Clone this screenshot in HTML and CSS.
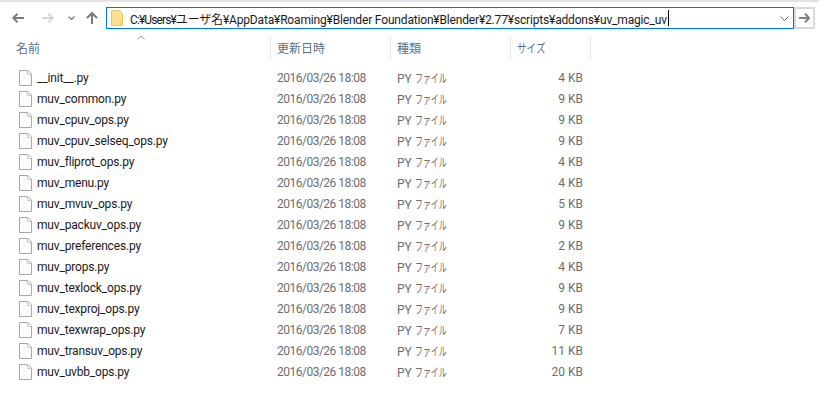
FILE: index.html
```html
<!DOCTYPE html>
<html lang="ja">
<head>
    <meta charset="UTF-8">
    <meta name="viewport" content="width=device-width, initial-scale=1.0">
    <title>uv_magic_uv</title>
    <link rel="stylesheet" href="styles.css">
</head>
<body>
    <div class="top-line"></div>

    <svg class="defs" width="0" height="0">
        <symbol id="file" viewBox="0 0 13 16">
            <path d="M.5.500h8.500l3.500 3.500v11.500H.5z" fill="#fbfbfb" stroke="#a8a8a8"/>
            <path d="M8.500.500v4h4" fill="none" stroke="#c8c8c8"/>
        </symbol>
    </svg>

    <div class="nav-bar">
        <svg class="nav-icon back" width="12" height="10" viewBox="0 0 12 10"><path d="M5.500.700 1.300 5l4.200 4.300M1.300 5H12" fill="none" stroke="#7a7a7a" stroke-width="2"/></svg>
        <svg class="nav-icon forward" width="12" height="10" viewBox="0 0 12 10"><path d="M6.500.700 10.700 5l-4.200 4.300M10.700 5H0" fill="none" stroke="#d6d6d6" stroke-width="2"/></svg>
        <svg class="nav-icon recent" width="7" height="4" viewBox="0 0 7 4"><path d="M.5.500l3 3 3-3" fill="none" stroke="#7f7f7f" stroke-width="1.300"/></svg>
        <svg class="nav-icon up" width="12" height="12" viewBox="0 0 12 12"><path d="M1 6l5-5 5 5M6 1v11" fill="none" stroke="#7a7a7a" stroke-width="2"/></svg>

        <div class="address-box">
            <svg class="folder" width="12" height="16" viewBox="0 0 12 16"><path d="M.5.500h8l3 3v12H.5z" fill="#fbe08f" stroke="#eac65a"/><path d="M9.500 11v4.500h2V11z" fill="#f3cf6d"/></svg>
            <span class="path"><span class="path-head">C:¥Users¥</span>ユーザ名¥AppData¥Roaming¥Blender Foundation¥Blender¥2.77¥scripts¥addons¥uv_magic_uv</span>
            <span class="caret"></span>
            <svg class="dropdown" width="9" height="5" viewBox="0 0 9 5"><path d="M.5.500l4 4 4-4" fill="none" stroke="#6d6d6d" stroke-width="1"/></svg>
        </div>

        <div class="go-button">
            <svg width="11" height="10" viewBox="0 0 11 10"><path d="M6 .700 10 5 6 9.300M10 5H0" fill="none" stroke="#808080" stroke-width="2"/></svg>
        </div>
    </div>

    <div class="sort-arrow">
        <svg width="8" height="5" viewBox="0 0 8 5"><path d="M.5 4.500l3.500-3.500 3.500 3.500" fill="none" stroke="#9a9a9a"/></svg>
    </div>

    <div class="header-row">
        <div class="col-name header-cell">名前</div>
        <div class="col-date header-cell">更新日時</div>
        <div class="col-type header-cell">種類</div>
        <div class="col-size header-cell"><span class="kana-size">サイズ</span></div>
    </div>

    <div class="file-list">
        <div class="file-row"><div class="col-name"><svg class="file-icon" width="13" height="16"><use href="#file"/></svg><span>__init__.py</span></div><div class="col-date">2016/03/26 18:08</div><div class="col-type">PY <span class="kana">ファイル</span></div><div class="col-size">4 KB</div></div>
        <div class="file-row"><div class="col-name"><svg class="file-icon" width="13" height="16"><use href="#file"/></svg><span>muv_common.py</span></div><div class="col-date">2016/03/26 18:08</div><div class="col-type">PY <span class="kana">ファイル</span></div><div class="col-size">9 KB</div></div>
        <div class="file-row"><div class="col-name"><svg class="file-icon" width="13" height="16"><use href="#file"/></svg><span>muv_cpuv_ops.py</span></div><div class="col-date">2016/03/26 18:08</div><div class="col-type">PY <span class="kana">ファイル</span></div><div class="col-size">9 KB</div></div>
        <div class="file-row"><div class="col-name"><svg class="file-icon" width="13" height="16"><use href="#file"/></svg><span>muv_cpuv_selseq_ops.py</span></div><div class="col-date">2016/03/26 18:08</div><div class="col-type">PY <span class="kana">ファイル</span></div><div class="col-size">9 KB</div></div>
        <div class="file-row"><div class="col-name"><svg class="file-icon" width="13" height="16"><use href="#file"/></svg><span>muv_fliprot_ops.py</span></div><div class="col-date">2016/03/26 18:08</div><div class="col-type">PY <span class="kana">ファイル</span></div><div class="col-size">4 KB</div></div>
        <div class="file-row"><div class="col-name"><svg class="file-icon" width="13" height="16"><use href="#file"/></svg><span>muv_menu.py</span></div><div class="col-date">2016/03/26 18:08</div><div class="col-type">PY <span class="kana">ファイル</span></div><div class="col-size">4 KB</div></div>
        <div class="file-row"><div class="col-name"><svg class="file-icon" width="13" height="16"><use href="#file"/></svg><span>muv_mvuv_ops.py</span></div><div class="col-date">2016/03/26 18:08</div><div class="col-type">PY <span class="kana">ファイル</span></div><div class="col-size">5 KB</div></div>
        <div class="file-row"><div class="col-name"><svg class="file-icon" width="13" height="16"><use href="#file"/></svg><span>muv_packuv_ops.py</span></div><div class="col-date">2016/03/26 18:08</div><div class="col-type">PY <span class="kana">ファイル</span></div><div class="col-size">9 KB</div></div>
        <div class="file-row"><div class="col-name"><svg class="file-icon" width="13" height="16"><use href="#file"/></svg><span>muv_preferences.py</span></div><div class="col-date">2016/03/26 18:08</div><div class="col-type">PY <span class="kana">ファイル</span></div><div class="col-size">2 KB</div></div>
        <div class="file-row"><div class="col-name"><svg class="file-icon" width="13" height="16"><use href="#file"/></svg><span>muv_props.py</span></div><div class="col-date">2016/03/26 18:08</div><div class="col-type">PY <span class="kana">ファイル</span></div><div class="col-size">4 KB</div></div>
        <div class="file-row"><div class="col-name"><svg class="file-icon" width="13" height="16"><use href="#file"/></svg><span>muv_texlock_ops.py</span></div><div class="col-date">2016/03/26 18:08</div><div class="col-type">PY <span class="kana">ファイル</span></div><div class="col-size">9 KB</div></div>
        <div class="file-row"><div class="col-name"><svg class="file-icon" width="13" height="16"><use href="#file"/></svg><span>muv_texproj_ops.py</span></div><div class="col-date">2016/03/26 18:08</div><div class="col-type">PY <span class="kana">ファイル</span></div><div class="col-size">9 KB</div></div>
        <div class="file-row"><div class="col-name"><svg class="file-icon" width="13" height="16"><use href="#file"/></svg><span>muv_texwrap_ops.py</span></div><div class="col-date">2016/03/26 18:08</div><div class="col-type">PY <span class="kana">ファイル</span></div><div class="col-size">7 KB</div></div>
        <div class="file-row"><div class="col-name"><svg class="file-icon" width="13" height="16"><use href="#file"/></svg><span>muv_transuv_ops.py</span></div><div class="col-date">2016/03/26 18:08</div><div class="col-type">PY <span class="kana">ファイル</span></div><div class="col-size">11 KB</div></div>
        <div class="file-row"><div class="col-name"><svg class="file-icon" width="13" height="16"><use href="#file"/></svg><span>muv_uvbb_ops.py</span></div><div class="col-date">2016/03/26 18:08</div><div class="col-type">PY <span class="kana">ファイル</span></div><div class="col-size">20 KB</div></div>
    </div>
</body>
</html>
```

FILE: styles.css
```css
html, body {
    margin: 0;
    padding: 0;
}

body {
    width: 819px;
    height: 412px;
    overflow: hidden;
    background-color: #fff;
    font-family: Roboto, "Noto Sans CJK JP", sans-serif;
    font-size: 12px;
    color: #6d6d6d;
    position: relative;
}

.top-line {
    height: 2px;
    background-color: #e3e3e3;
}

.defs {
    position: absolute;
}

.nav-bar {
    display: flex;
    align-items: center;
    height: 22px;
    margin-top: 5px;
}

.nav-icon {
    flex: none;
}

.back { margin-left: 12px; }
.forward { margin-left: 18px; }
.recent { margin-left: 14px; }
.up { margin-left: 11px; }

.address-box {
    flex: none;
    display: flex;
    align-items: center;
    box-sizing: border-box;
    width: 688px;
    height: 22px;
    margin-left: 8px;
    padding-left: 4px;
    border: 1px solid #0078d7;
    color: #1a1a1a;
}

.folder {
    flex: none;
    margin-right: 7px;
}

.path {
    white-space: nowrap;
    letter-spacing: -0.17px;
}

.path-head {
    letter-spacing: -0.9px;
}

.caret {
    width: 1px;
    height: 16px;
    margin-left: 1px;
    background-color: #000;
}

.dropdown {
    margin-left: auto;
    margin-right: 4px;
}

.go-button {
    box-sizing: border-box;
    width: 21px;
    height: 22px;
    display: flex;
    align-items: center;
    justify-content: center;
    border: 2px solid #d9d9d9;
}

.sort-arrow {
    position: absolute;
    left: 137px;
    top: 35px;
    line-height: 0;
}

.header-row {
    display: flex;
    height: 25px;
    margin-top: 7px;
    color: #5a6f86;
}

.header-cell {
    box-sizing: border-box;
    border-right: 1px solid #e5e5e5;
    line-height: 27px;
}

.header-row .col-name {
    width: 271px;
    padding-left: 16px;
}

.header-row .col-date {
    width: 120px;
    padding-left: 6px;
}

.header-row .col-type {
    width: 120px;
    padding-left: 6px;
}

.header-row .col-size {
    width: 80px;
    padding-left: 6px;
}

.kana-size {
    display: inline-block;
    transform: scaleX(0.8);
    transform-origin: left;
}

.file-list {
    margin-top: 6px;
}

.file-row {
    display: flex;
    align-items: center;
    height: 21px;
}

.file-row .col-name {
    display: flex;
    align-items: center;
    width: 271px;
    padding-left: 19px;
    box-sizing: border-box;
    color: #1a1a1a;
    letter-spacing: -0.18px;
}

.file-icon {
    flex: none;
    margin-right: 5px;
}

.file-row .col-date {
    width: 120px;
    padding-left: 6px;
    box-sizing: border-box;
    letter-spacing: -0.5px;
}

.file-row .col-type {
    width: 120px;
    padding-left: 6px;
    box-sizing: border-box;
}

.kana {
    display: inline-block;
    transform: scaleX(0.66);
    transform-origin: left;
}

.file-row .col-size {
    width: 72px;
    text-align: right;
    box-sizing: border-box;
}
```
